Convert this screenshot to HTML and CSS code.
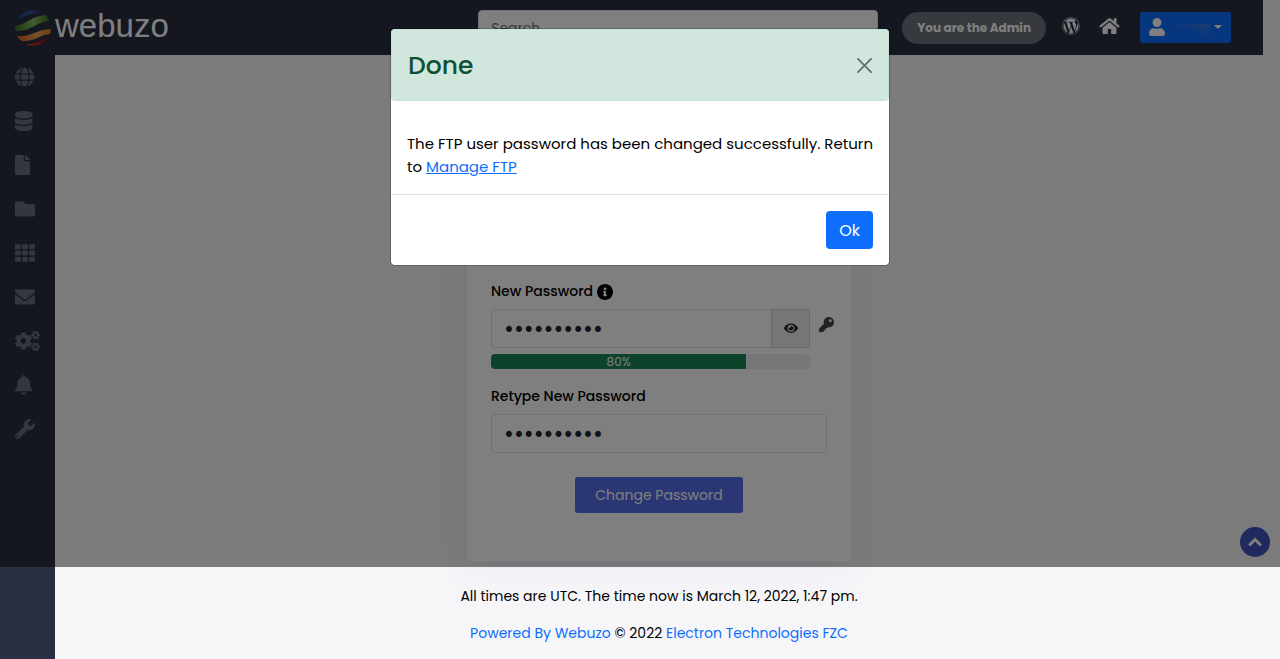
FILE: index.html
```html
<!DOCTYPE html>
<html lang="en">
<head>
    <meta charset="UTF-8">
    <meta name="viewport" content="width=device-width, initial-scale=1.0">
    <title>Webuzo - Change FTP Password</title>
    <link rel="stylesheet" href="styles.css">
</head>
<body>
    <header class="topbar">
        <a href="#" class="logo">
            <svg class="logo-ball" viewBox="0 0 38 38" aria-hidden="true">
                <defs>
                    <clipPath id="ball"><circle cx="19" cy="19" r="18"/></clipPath>
                    <linearGradient id="green"><stop offset="0" stop-color="#2c6a1c"/><stop offset=".5" stop-color="#86b860"/><stop offset="1" stop-color="#2c6418"/></linearGradient>
                    <linearGradient id="orange"><stop offset="0" stop-color="#e0561c"/><stop offset=".6" stop-color="#e8a850"/><stop offset="1" stop-color="#d87a28"/></linearGradient>
                    <linearGradient id="blue"><stop offset="0" stop-color="#22408c"/><stop offset=".6" stop-color="#3c5498"/><stop offset="1" stop-color="#1c3270"/></linearGradient>
                    <linearGradient id="red"><stop offset="0" stop-color="#b83a30"/><stop offset="1" stop-color="#8c0c0c"/></linearGradient>
                </defs>
                <g clip-path="url(#ball)">
                    <path fill="url(#blue)" d="M3 12C9 7 17 4 27 4L25 0H8z"/>
                    <path fill="url(#green)" d="M0 17C12 16 20 5 34 6l4 6C24 11 15 24 0 22z"/>
                    <path fill="url(#orange)" d="M1 27c16 2 21-7 37-7v5C26 25 21 33 8 32z"/>
                    <path fill="url(#red)" d="M13 35c10 0 15-4 24-8v11H13z"/>
                </g>
            </svg>
            <span>webuzo</span>
        </a>
        <input type="search" class="form-control search" placeholder="Search" aria-label="Search">
        <span class="admin-badge">You are the Admin</span>
        <nav class="top-links">
            <a href="#" aria-label="WordPress">
                <svg class="icon-wp" viewBox="0 0 512 512"><path d="M61.7 169.4l101.5 278C92.2 413 43.3 340.2 43.3 256c0-30.9 6.6-60.1 18.4-86.6zm337.9 75.9c0-26.3-9.4-44.5-17.5-58.7-10.8-17.5-20.9-32.4-20.9-49.9 0-19.6 14.8-37.8 35.7-37.8.9 0 1.8.1 2.8.2-37.9-34.7-88.3-55.9-143.7-55.9-74.3 0-139.7 38.1-177.8 95.9 5 .2 9.7.3 13.7.3 22.2 0 56.7-2.7 56.7-2.7 11.5-.7 12.8 16.2 1.4 17.5 0 0-11.5 1.3-24.3 2l77.5 230.4L249.8 247l-33.1-90.8c-11.5-.7-22.3-2-22.3-2-11.5-.7-10.1-18.2 1.3-17.5 0 0 35.1 2.7 56 2.7 22.2 0 56.7-2.7 56.7-2.7 11.5-.7 12.8 16.2 1.4 17.5 0 0-11.5 1.3-24.3 2l76.9 228.7 21.2-70.9c9-29.4 16-50.5 16-68.7zm-139.9 29.3l-63.8 185.5c19.1 5.6 39.2 8.7 60.1 8.7 24.8 0 48.5-4.3 70.6-12.1-.6-.9-1.1-1.9-1.5-2.9l-65.4-179.2zm183-120.7c.9 6.8 1.4 14 1.4 21.9 0 21.6-4 45.8-16.2 76.2l-65 187.9C426.2 403 468.7 334.5 468.7 256c0-37-9.4-71.8-26-102.1zM504 256c0 136.8-111.3 248-248 248C119.2 504 8 392.7 8 256 8 119.2 119.2 8 256 8c136.7 0 248 111.2 248 248zm-11.4 0c0-130.5-106.2-236.6-236.6-236.6C125.5 19.4 19.4 125.5 19.4 256S125.6 492.6 256 492.6c130.5 0 236.6-106.1 236.6-236.6z"/></svg>
            </a>
            <a href="#" aria-label="Home">
                <svg class="icon-home" viewBox="0 0 576 512"><path d="M488 312.7V456c0 13.3-10.7 24-24 24H348c-6.6 0-12-5.4-12-12V356c0-6.6-5.4-12-12-12h-72c-6.6 0-12 5.4-12 12v112c0 6.6-5.4 12-12 12H112c-13.3 0-24-10.7-24-24V312.7c0-3.6 1.6-7 4.4-9.3l188-154.8c4.4-3.6 10.8-3.6 15.3 0l188 154.8c2.7 2.3 4.3 5.7 4.3 9.3zm83.6-60.9L488 182.9V44.4c0-6.6-5.4-12-12-12h-56c-6.6 0-12 5.4-12 12V117l-89.5-73.7c-17.7-14.6-43.3-14.6-61 0L4.4 251.8c-5.1 4.2-5.8 11.8-1.6 16.9l25.5 31c4.2 5.1 11.8 5.8 16.9 1.6l235.2-193.7c4.4-3.6 10.8-3.6 15.3 0l235.2 193.7c5.1 4.2 12.7 3.5 16.9-1.6l25.5-31c4.2-5.2 3.4-12.7-1.7-16.9z"/></svg>
            </a>
        </nav>
        <button type="button" class="user-menu" aria-label="User menu">
            <svg class="icon-user" viewBox="0 0 448 512"><path d="M224 256c70.7 0 128-57.3 128-128S294.7 0 224 0 96 57.3 96 128s57.3 128 128 128zm89.6 32h-16.7c-22.2 10.2-46.9 16-72.9 16s-50.6-5.8-72.9-16h-16.7C60.2 288 0 348.2 0 422.4V464c0 26.5 21.5 48 48 48h352c26.5 0 48-21.5 48-48v-41.6c0-74.2-60.2-134.4-134.4-134.4z"/></svg>
            <span class="user-name"></span>
            <span class="caret"></span>
        </button>
    </header>

    <div class="layout">
        <nav class="sidebar">
            <a href="#" aria-label="Domains"><svg viewBox="0 0 496 512"><path d="M336.5 160C322 70.7 287.8 8 248 8s-74 62.7-88.5 152h177zM152 256c0 22.2 1.2 43.5 3.3 64h185.3c2.1-20.5 3.3-41.8 3.3-64s-1.2-43.5-3.3-64H155.3c-2.1 20.5-3.3 41.8-3.3 64zm324.7-96c-28.6-67.9-86.5-120.4-158-141.6 24.4 33.8 41.2 84.7 50 141.6h108zM177.2 18.4C105.8 39.6 47.8 92.1 19.3 160h108c8.7-56.9 25.5-107.8 49.9-141.6zM487.4 192H372.7c2.1 21 3.3 42.5 3.3 64s-1.2 43-3.3 64h114.6c5.5-20.5 8.6-41.8 8.6-64s-3.1-43.5-8.5-64zM120 256c0-21.5 1.2-43 3.3-64H8.6C3.2 212.5 0 233.8 0 256s3.2 43.5 8.6 64h114.6c-2-21-3.2-42.5-3.2-64zm39.5 96c14.5 89.3 48.7 152 88.5 152s74-62.7 88.5-152h-177zm159.3 141.6c71.4-21.2 129.4-73.7 158-141.6h-108c-8.8 56.9-25.6 107.8-50 141.6zM19.3 352c28.6 67.9 86.5 120.4 158 141.6-24.4-33.8-41.2-84.7-50-141.6h-108z"/></svg></a>
            <a href="#" aria-label="Databases"><svg viewBox="0 0 448 512"><path d="M448 73.143v45.714C448 159.143 347.667 192 224 192S0 159.143 0 118.857V73.143C0 32.857 100.333 0 224 0s224 32.857 224 73.143zM448 176v102.857C448 319.143 347.667 352 224 352S0 319.143 0 278.857V176c48.125 33.143 136.208 48.572 224 48.572S399.874 209.143 448 176zm0 160v102.857C448 479.143 347.667 512 224 512S0 479.143 0 438.857V336c48.125 33.143 136.208 48.572 224 48.572S399.874 369.143 448 336z"/></svg></a>
            <a href="#" aria-label="Files"><svg viewBox="0 0 384 512"><path d="M224 136V0H24C10.7 0 0 10.7 0 24v464c0 13.3 10.7 24 24 24h336c13.3 0 24-10.7 24-24V160H248c-13.2 0-24-10.8-24-24zm160-14.1v6.1H256V0h6.1c6.4 0 12.5 2.5 17 7l97.9 98c4.5 4.5 7 10.6 7 16.9z"/></svg></a>
            <a href="#" aria-label="FTP"><svg viewBox="0 0 512 512"><path d="M464 128H272l-64-64H48C21.49 64 0 85.49 0 112v288c0 26.51 21.49 48 48 48h416c26.51 0 48-21.49 48-48V176c0-26.51-21.49-48-48-48z"/></svg></a>
            <a href="#" aria-label="Applications"><svg viewBox="0 0 512 512"><path d="M24 32h101a24 24 0 0 1 24 24v80a24 24 0 0 1-24 24H24a24 24 0 0 1-24-24V56a24 24 0 0 1 24-24zm181 0h102a24 24 0 0 1 24 24v80a24 24 0 0 1-24 24H205a24 24 0 0 1-24-24V56a24 24 0 0 1 24-24zm182 0h101a24 24 0 0 1 24 24v80a24 24 0 0 1-24 24H387a24 24 0 0 1-24-24V56a24 24 0 0 1 24-24zM24 192h101a24 24 0 0 1 24 24v80a24 24 0 0 1-24 24H24a24 24 0 0 1-24-24v-80a24 24 0 0 1 24-24zm181 0h102a24 24 0 0 1 24 24v80a24 24 0 0 1-24 24H205a24 24 0 0 1-24-24v-80a24 24 0 0 1 24-24zm182 0h101a24 24 0 0 1 24 24v80a24 24 0 0 1-24 24H387a24 24 0 0 1-24-24v-80a24 24 0 0 1 24-24zM24 352h101a24 24 0 0 1 24 24v80a24 24 0 0 1-24 24H24a24 24 0 0 1-24-24v-80a24 24 0 0 1 24-24zm181 0h102a24 24 0 0 1 24 24v80a24 24 0 0 1-24 24H205a24 24 0 0 1-24-24v-80a24 24 0 0 1 24-24zm182 0h101a24 24 0 0 1 24 24v80a24 24 0 0 1-24 24H387a24 24 0 0 1-24-24v-80a24 24 0 0 1 24-24z"/></svg></a>
            <a href="#" aria-label="Email"><svg viewBox="0 0 512 512"><path d="M502.3 190.8c3.9-3.1 9.7-.2 9.7 4.7V400c0 26.5-21.5 48-48 48H48c-26.5 0-48-21.5-48-48V195.6c0-5 5.7-7.8 9.7-4.7 22.4 17.4 52.1 39.5 154.1 113.6 21.1 15.4 56.7 47.8 92.2 47.6 35.7.3 72-32.8 92.3-47.6 102-74.1 131.6-96.3 154-113.7zM256 320c23.2.4 56.6-29.2 73.4-41.4 132.7-96.3 142.8-104.7 173.4-128.7 5.8-4.5 9.2-11.5 9.2-18.9v-19c0-26.5-21.5-48-48-48H48c-26.5 0-48 21.5-48 48v19c0 7.4 3.4 14.3 9.2 18.9 30.6 23.9 40.7 32.4 173.4 128.7 16.8 12.2 50.2 41.8 73.4 41.4z"/></svg></a>
            <a href="#" aria-label="Configuration">
                <svg viewBox="0 0 640 512">
                    <path d="M386.3 286.1l33.7 16.8c10.1 5.8 14.5 18.1 10.5 29.1-8.9 24.2-26.4 46.4-42.6 65.8-7.4 8.9-20.2 11.1-30.3 5.3l-29.1-16.8c-16 13.7-34.6 24.6-54.9 31.7v33.6c0 11.6-8.3 21.6-19.7 23.6-24.6 4.2-50.4 4.4-75.9 0-11.5-2-20-11.9-20-23.6V418c-20.3-7.2-38.9-18-54.9-31.7L74 403c-10 5.8-22.9 3.6-30.3-5.3-16.2-19.4-33.3-41.6-42.2-65.7-4-10.9.4-23.2 10.5-29.1l33.3-16.8c-3.9-20.9-3.9-42.4 0-63.4L12 205.8c-10.1-5.8-14.6-18.1-10.5-29 8.9-24.2 26-46.4 42.2-65.8 7.4-8.9 20.2-11.1 30.3-5.3l29.1 16.8c16-13.7 34.6-24.6 54.9-31.7V57.1c0-11.5 8.2-21.5 19.6-23.5 24.6-4.2 50.5-4.4 76-.1 11.5 2 20 11.9 20 23.6v33.6c20.3 7.2 38.9 18 54.9 31.7l29.1-16.8c10-5.8 22.9-3.6 30.3 5.3 16.2 19.4 33.2 41.6 42.1 65.8 4 10.9.1 23.2-10 29.1l-33.7 16.8c3.9 21 3.9 42.5 0 63.5zm-117.6 21.1c59.2-77-28.7-164.9-105.7-105.7-59.2 77 28.7 164.9 105.7 105.7z"/>
                    <path id="small-cog" d="M512.1 191l-8.2 14.3c-3 5.3-9.4 7.5-15.1 5.4-11.8-4.4-22.6-10.7-32.1-18.6-4.6-3.8-5.8-10.5-2.8-15.7l8.2-14.3c-6.9-8-12.3-17.3-15.9-27.4h-16.5c-6 0-11.2-4.3-12.2-10.3-2-12-2.1-24.6 0-37.1 1-6 6.2-10.4 12.2-10.4h16.5c3.6-10.1 9-19.4 15.9-27.4l-8.2-14.3c-3-5.2-1.9-11.9 2.8-15.7 9.5-7.9 20.4-14.2 32.1-18.6 5.7-2.1 12.1.1 15.1 5.4l8.2 14.3c10.5-1.9 21.2-1.9 31.7 0L552 6.3c3-5.3 9.4-7.5 15.1-5.4 11.8 4.4 22.6 10.7 32.1 18.6 4.6 3.8 5.8 10.5 2.8 15.7l-8.2 14.3c6.9 8 12.3 17.3 15.9 27.4h16.5c6 0 11.2 4.3 12.2 10.3 2 12 2.1 24.6 0 37.1-1 6-6.2 10.4-12.2 10.4h-16.5c-3.6 10.1-9 19.4-15.9 27.4l8.2 14.3c3 5.2 1.9 11.9-2.8 15.7-9.5 7.9-20.4 14.2-32.1 18.6-5.7 2.1-12.1-.1-15.1-5.4l-8.2-14.3c-10.4 1.9-21.2 1.9-31.7 0zm-10.5-58.8c38.5 29.6 82.4-14.3 52.8-52.8-38.5-29.7-82.4 14.3-52.8 52.8z"/>
                    <use href="#small-cog" y="300"/>
                </svg>
            </a>
            <a href="#" aria-label="Notifications"><svg viewBox="0 0 448 512"><path d="M224 512c35.32 0 63.97-28.65 63.97-64H160.03c0 35.35 28.65 64 63.97 64zm215.39-149.71c-19.32-20.76-55.47-51.99-55.47-154.29 0-77.7-54.48-139.9-127.94-155.16V32c0-17.67-14.32-32-31.98-32s-31.98 14.33-31.98 32v20.84C118.56 68.1 64.08 130.3 64.08 208c0 102.3-36.15 133.53-55.47 154.29-6 6.45-8.66 14.16-8.61 21.71.11 16.4 12.98 32 32.1 32h383.8c19.12 0 32-15.6 32.1-32 .05-7.55-2.61-15.27-8.61-21.71z"/></svg></a>
            <a href="#" aria-label="Tools"><svg viewBox="0 0 512 512"><path d="M507.73 109.1c-2.24-9.03-13.54-12.09-20.12-5.51l-74.36 74.36-67.88-11.31-11.31-67.88 74.36-74.36c6.62-6.62 3.43-17.9-5.66-20.16-47.38-11.74-99.55.91-136.58 37.93-39.64 39.64-50.55 97.1-34.05 147.2L18.74 402.76c-24.99 24.99-24.99 65.51 0 90.5 24.99 24.99 65.51 24.99 90.5 0l213.21-213.21c50.12 16.71 107.47 5.68 147.37-34.22 37.07-37.07 49.7-89.32 37.91-136.73zM64 472c-13.25 0-24-10.75-24-24 0-13.26 10.75-24 24-24s24 10.74 24 24c0 13.25-10.75 24-24 24z"/></svg></a>
        </nav>

        <div class="content">
            <main>
                <form class="card">
                    <label for="newpass">New Password
                        <svg class="icon-info" viewBox="8 8 496 496"><path d="M256 8C119.043 8 8 119.083 8 256c0 136.997 111.043 248 248 248s248-111.003 248-248C504 119.083 392.957 8 256 8zm0 110c23.196 0 42 18.804 42 42s-18.804 42-42 42-42-18.804-42-42 18.804-42 42-42zm56 254c0 6.627-5.373 12-12 12h-88c-6.627 0-12-5.373-12-12v-24c0-6.627 5.373-12 12-12h12v-64h-12c-6.627 0-12-5.373-12-12v-24c0-6.627 5.373-12 12-12h64c6.627 0 12 5.373 12 12v100h12c6.627 0 12 5.373 12 12v24z"/></svg>
                    </label>
                    <div class="password-row">
                        <div class="input-group">
                            <input type="password" id="newpass" class="form-control" value="webuzo1234">
                            <button type="button" class="show-pass" aria-label="Show password">
                                <svg viewBox="0 0 576 512"><path d="M572.52 241.4C518.29 135.59 410.93 64 288 64S57.68 135.64 3.48 241.41a32.35 32.35 0 0 0 0 29.19C57.71 376.41 165.07 448 288 448s230.32-71.64 284.52-177.41a32.35 32.35 0 0 0 0-29.19zM288 400a144 144 0 1 1 144-144 143.93 143.93 0 0 1-144 144zm0-240a95.31 95.31 0 0 0-25.31 3.79 47.85 47.85 0 0 1-66.9 66.9A95.78 95.78 0 1 0 288 160z"/></svg>
                            </button>
                        </div>
                        <a href="#" class="generate" aria-label="Generate a random password">
                            <svg viewBox="0 0 512 512"><path d="M512 176.001C512 273.203 433.202 352 336 352c-11.22 0-22.19-1.062-32.827-3.069l-24.012 27.014A23.999 23.999 0 0 1 261.223 384H224v40c0 13.255-10.745 24-24 24h-40v40c0 13.255-10.745 24-24 24H24c-13.255 0-24-10.745-24-24v-78.059c0-6.365 2.529-12.47 7.029-16.971l161.802-161.802C163.108 213.814 160 195.271 160 176 160 78.798 238.797.001 335.999 0 433.488-.001 512 78.511 512 176.001zM336 128c0 26.51 21.49 48 48 48s48-21.49 48-48-21.49-48-48-48-48 21.49-48 48z"/></svg>
                        </a>
                    </div>
                    <div class="progress">
                        <div class="progress-bar" style="width: 80%">80%</div>
                    </div>
                    <label for="conf">Retype New Password</label>
                    <input type="password" id="conf" class="form-control" value="webuzo1234">
                    <button type="submit" class="submit">Change Password</button>
                </form>
            </main>
            <footer class="footer">
                <p>All times are UTC. The time now is March 12, 2022, 1:47 pm.</p>
                <p><a href="#">Powered By Webuzo</a> © 2022 <a href="#">Electron Technologies FZC</a></p>
            </footer>
        </div>
    </div>

    <button type="button" class="to-top" aria-label="Back to top">
        <svg viewBox="0 0 14 14"><path d="M2 9.5l5-5 5 5" fill="none" stroke="currentColor" stroke-width="3" stroke-linecap="round"/></svg>
    </button>

    <div class="backdrop">
        <div class="modal" role="dialog" aria-labelledby="modal-title">
            <div class="modal-header">
                <h4 id="modal-title">Done</h4>
                <button type="button" class="close" aria-label="Close">
                    <svg viewBox="0 0 16 16"><path d="M1 1l14 14M15 1L1 15" stroke="currentColor" stroke-width="2" stroke-linecap="round"/></svg>
                </button>
            </div>
            <div class="modal-body">
                The FTP user password has been changed successfully. Return to <a href="#">Manage FTP</a>
            </div>
            <div class="modal-footer">
                <button type="button" class="ok">Ok</button>
            </div>
        </div>
    </div>
</body>
</html>
```
FILE: styles.css
```css
* {
    box-sizing: border-box;
}

body {
    position: relative;
    display: flex;
    flex-direction: column;
    min-height: 100vh;
    margin: 0;
    background: #f6f6f9;
    color: #000;
    font-family: Poppins, Inter, sans-serif;
    font-size: 14px;
    line-height: 21px;
}

svg {
    display: block;
    fill: currentColor;
}

button,
input {
    font-family: inherit;
}

button {
    border: none;
    cursor: pointer;
}

a {
    color: #0d6efd;
    text-decoration: none;
}

/* top bar */
.topbar {
    display: flex;
    align-items: center;
    height: 55px;
    margin-right: 17px;
    padding: 0 32px 0 14px;
    background: #2a2e41;
    color: #fff;
}

.logo {
    display: flex;
    align-items: center;
    gap: 3px;
    color: #fff;
    font-family: "Liberation Sans", Arial, sans-serif;
    font-size: 33px;
    line-height: 36px;
}

.logo span {
    padding-bottom: 3px;
}

.logo-ball {
    width: 38px;
    height: 38px;
}

.form-control {
    width: 100%;
    height: 39px;
    padding: 6px 12px;
    border: 1px solid #dee2e6;
    border-radius: 4px;
    background: #fff;
    color: #212529;
    font-size: 16px;
}

.form-control[type="password"] {
    padding: 0 12px;
    font-size: 24px;
}

.search {
    width: 400px;
    height: 36px;
    margin-left: auto;
    padding: 8px 12px 6px;
    font-size: 14px;
}

.search::placeholder {
    color: #6c757d;
}

.admin-badge {
    margin-left: 24px;
    padding: 0 15px;
    border-radius: 16px;
    background: #6c757d;
    font-size: 12px;
    font-weight: 700;
    line-height: 32px;
}

.top-links {
    display: flex;
    align-items: center;
    gap: 19px;
    margin: 0 20px 3px 16px;
}

.top-links a {
    color: #fff;
}

.icon-wp {
    width: 18px;
    height: 18px;
}

.icon-home {
    width: 21px;
    height: 18px;
}

.user-menu {
    display: flex;
    align-items: center;
    height: 31px;
    padding: 0 9px 2px;
    border-radius: 3px;
    background: #0d6efd;
    color: #fff;
}

.icon-user {
    width: 16px;
    height: 18px;
}

.user-name {
    width: 36px;
    height: 12px;
    margin: 6px 4px 0 9px;
    background: linear-gradient(to top right, #0d6efd 40%, #3a7ad8);
}

.caret {
    border-top: 4px solid;
    border-right: 4px solid transparent;
    border-left: 4px solid transparent;
}

/* page */
.layout {
    display: flex;
    flex: 1;
}

.sidebar {
    width: 55px;
    background: #2a2e41;
}

.sidebar a {
    display: flex;
    align-items: center;
    height: 44px;
    padding-left: 15px;
    color: #6a6e7c;
}

.sidebar svg {
    height: 20px;
}

.content {
    display: flex;
    flex: 1;
    flex-direction: column;
    padding-right: 17px;
}

main {
    flex: 1;
    padding-top: 177px;
}

.card {
    display: flex;
    flex-direction: column;
    width: 384px;
    margin: 0 auto;
    padding: 49px 24px 48px;
    border-radius: 4px;
    background: #fff;
    box-shadow: 0 8px 30px rgba(120, 110, 180, 0.08);
}

.card label {
    display: flex;
    align-items: center;
    gap: 4px;
    margin-bottom: 7px;
    font-weight: 500;
}

.icon-info {
    width: 16px;
    height: 16px;
}

.password-row {
    display: flex;
    gap: 9px;
}

.input-group {
    display: flex;
    flex: none;
    width: 95%;
}

.input-group .form-control {
    flex: 1;
    min-width: 0;
    border-right: none;
    border-radius: 4px 0 0 4px;
}

.show-pass {
    display: flex;
    align-items: center;
    justify-content: center;
    width: 39px;
    border: 1px solid #ced4da;
    background: #e9ecef;
    color: #212529;
}

.show-pass svg {
    width: 14px;
}

.generate {
    margin-top: 8px;
    color: #444;
}

.generate svg {
    width: 15px;
    height: 15px;
}

.progress {
    width: 95%;
    height: 15px;
    margin: 6px 0 17px;
    border-radius: 4px;
    background: #e9ecef;
    overflow: hidden;
}

.progress-bar {
    background: #198754;
    color: #fff;
    font-size: 12px;
    line-height: 15px;
    text-align: center;
}

.submit {
    align-self: center;
    height: 36px;
    margin-top: 24px;
    padding: 0 20px;
    border-radius: 3px;
    background: #566ce8;
    color: #fff;
    font-size: 14px;
}

.footer {
    height: 92px;
    padding-top: 19px;
    text-align: center;
}

.footer p {
    margin: 0 0 16px;
}

.to-top {
    position: absolute;
    right: 10px;
    bottom: 102px;
    display: flex;
    align-items: center;
    justify-content: center;
    width: 30px;
    height: 30px;
    padding: 0;
    border-radius: 50%;
    background: #4354be;
    color: #fff;
}

.to-top svg {
    width: 14px;
    height: 14px;
}

/* modal */
.backdrop {
    position: absolute;
    inset: 0 0 92px;
    padding: 28px 16px;
    background: rgba(0, 0, 0, 0.5);
}

.modal {
    max-width: 500px;
    margin: 0 auto;
    border: 1px solid rgba(0, 0, 0, 0.2);
    border-radius: 5px;
    background: #fff;
    background-clip: padding-box;
    font-size: 15px;
    line-height: 23px;
}

.modal-header {
    display: flex;
    align-items: center;
    justify-content: space-between;
    height: 72px;
    padding: 0 16px;
    border: 1px solid #c8e2d6;
    border-radius: 4px;
    background: #d1e7dd;
    color: #0f5132;
}

.modal-header h4 {
    margin: 0;
    font-size: 25px;
    font-weight: 500;
}

.close {
    padding: 0;
    background: none;
    color: #000;
    opacity: 0.5;
}

.close svg {
    width: 15px;
    height: 15px;
}

.modal-body {
    padding: 31px 12px 16px 16px;
}

.modal-body a {
    text-decoration: underline;
}

.modal-footer {
    display: flex;
    justify-content: flex-end;
    padding: 16px;
    border-top: 1px solid #dee2e6;
}

.ok {
    height: 38px;
    padding: 0 13px;
    border-radius: 4px;
    background: #0d6efd;
    color: #fff;
    font-size: 16px;
}
```
